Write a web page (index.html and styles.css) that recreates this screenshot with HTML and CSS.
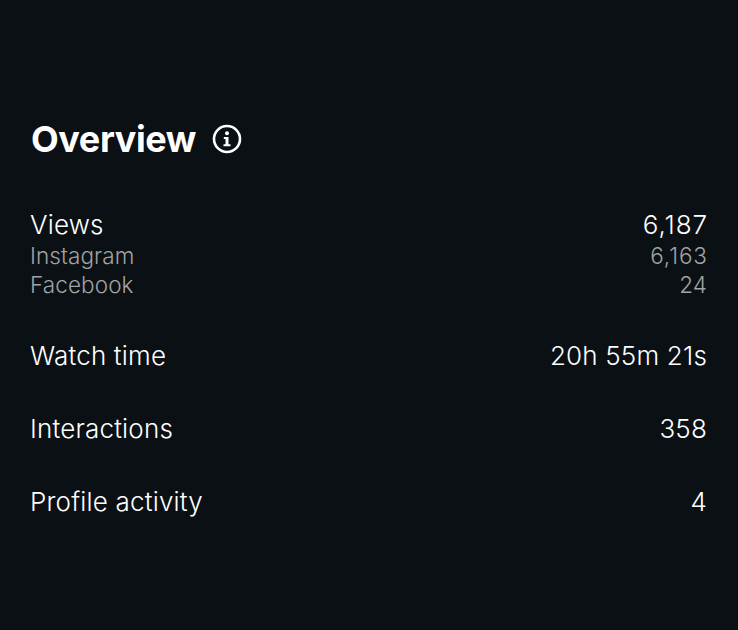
FILE: index.html
```html
<!DOCTYPE html>
<html lang="en">
<head>
    <meta charset="UTF-8">
    <meta name="viewport" content="width=device-width, initial-scale=1.0">
    <title>Overview</title>
    <link rel="stylesheet" href="styles.css">
</head>
<body>
    <div class="overview">
        <div class="heading">
            <h1>Overview</h1>
            <svg class="info-icon" width="30" height="30" viewBox="0 0 30 30" fill="none">
                <circle cx="15" cy="15" r="13" stroke="#fff" stroke-width="2.6"/>
                <circle cx="15" cy="9.2" r="2" fill="#fff"/>
                <path d="M11.8 13h4.7v7.2h2v2h-7v-2h2v-5.200h-1.700z" fill="#fff"/>
            </svg>
        </div>
        <div class="group">
            <div class="row total"><span>Views</span><span class="count">6,187</span></div>
            <div class="row sub"><span>Instagram</span><span class="count">6,163</span></div>
            <div class="row sub"><span>Facebook</span><span>24</span></div>
        </div>
        <div class="group row"><span>Watch time</span><span>20h 55m 21s</span></div>
        <div class="group row"><span>Interactions</span><span>358</span></div>
        <div class="group row"><span>Profile activity</span><span>4</span></div>
    </div>
</body>
</html>
```

FILE: styles.css
```css
body {
    margin: 0;
    padding: 0;
    height: 630px;
    overflow: hidden;
    background-color: #0b1014;
    color: #fff;
    font-family: Inter, "Liberation Sans", sans-serif;
}
.overview {
    padding: 117px 31px 0 30px;
}
.heading {
    display: flex;
    align-items: center;
    gap: 16px;
    height: 44px;
    margin-bottom: 48px;
    padding-left: 1px;
}
h1 {
    margin: 0;
    font-size: 36px;
    font-weight: 700;
    letter-spacing: -0.4px;
}
.row {
    display: flex;
    justify-content: space-between;
    font-size: 26px;
    font-weight: 300;
    line-height: 32px;
    letter-spacing: 0.18px;
}
.total {
    padding-bottom: 1px;
}
.group {
    margin-bottom: 41px;
}
.sub {
    font-size: 22.5px;
    line-height: 28.5px;
    letter-spacing: 0.1px;
    color: #a0a2a4;
}
.count {
    letter-spacing: 0.9px;
    margin-right: -0.9px;
}
```
